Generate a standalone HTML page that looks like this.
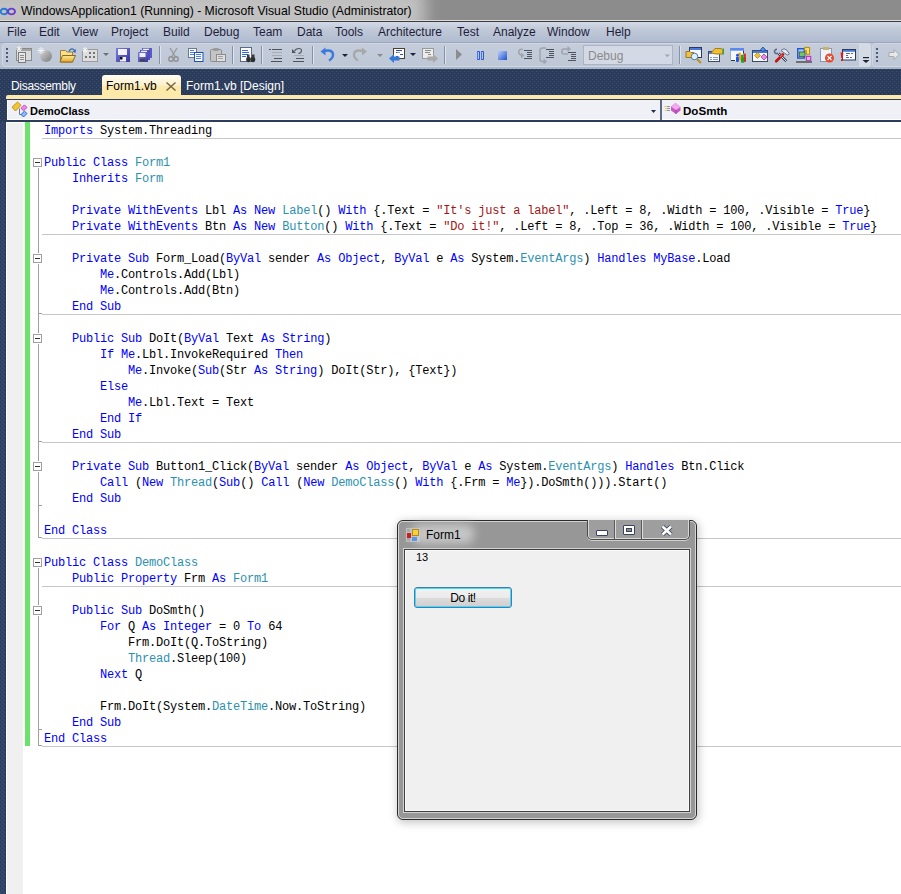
<!DOCTYPE html>
<html><head><meta charset="utf-8">
<style>
*{margin:0;padding:0;box-sizing:border-box}
html,body{width:901px;height:894px;overflow:hidden}
body{position:relative;background-color:#2b3b5a;background-image:conic-gradient(at 1px 1px,transparent 270deg,#3c4f74 0),conic-gradient(at 1px 1px,transparent 270deg,#3c4f74 0);background-size:4px 4px;background-position:2px 1px,0 3px;font-family:"Liberation Sans",sans-serif;font-size:12px;color:#000}
.a{position:absolute}
#title{left:0;top:0;width:901px;height:20px;background:#8c8c8c;overflow:hidden}
#glow{left:-20px;top:-12px;width:445px;height:44px;background:#c2c2c2;filter:blur(8px)}
#title .t{left:21px;top:4px;font-size:12.2px;white-space:pre;color:#000}
#tl1{left:0;top:20px;width:901px;height:1px;background:#dcdcdc}
#tl2{left:0;top:21px;width:901px;height:1px;background:#3c3c3c}
#menu{left:0;top:22px;width:901px;height:20px;background:linear-gradient(#d4dbe8,#c3cbd9 30%,#b0bbd0)}
#menu span{position:absolute;top:3px;white-space:pre;color:#1e1e3c}
#ml{left:0;top:42px;width:901px;height:1px;background:#9aa7bf}
#tbar{left:0;top:43px;width:901px;height:26px;background:linear-gradient(#b9c3d3 0,#b9c3d3 24px,#a9b5c8 24px)}
#tb1{left:2px;top:43px;width:868px;height:24px;border-radius:3px;background:linear-gradient(#c5cddb,#bdc7d6);border:1px solid #d0d7e2}
#tbov{left:859px;top:43px;width:12px;height:24px;border-radius:0 3px 3px 0;background:#d5dbe5}
#tb2{left:872px;top:43px;width:40px;height:24px;border-radius:3px;background:linear-gradient(#c5cddb,#bdc7d6);border:1px solid #d0d7e2}
.grip{width:2px;height:2px;background:#4a5a78}
#navy{display:none}
#ystrip{left:6px;top:95px;width:895px;height:4px;background:#fde9a9;border-radius:2px 0 0 0}
#dd{left:7px;top:100px;width:894px;height:20px;background:#f0f1f7;border-left:1px solid #fff;border-bottom:1px solid #fff}
#ddsep{left:660px;top:100px;width:2px;height:20px;background:#5d6b85}
#ln99{left:6px;top:99px;width:895px;height:1px;background:#2e3d5b}
#ln120{left:6px;top:120px;width:895px;height:2px;background:#2e3d5b}
#editor{left:6px;top:122px;width:895px;height:772px;background:#fff}
#margin{left:7px;top:123px;width:16px;height:771px;background:#f0f0f0}
#green{left:25px;top:122px;width:5px;height:624px;background:#6be26b}
pre{position:absolute;left:44px;top:123px;font-family:"Liberation Mono",monospace;font-size:12px;line-height:16px;letter-spacing:-0.2px;color:#000}
.k{color:#0000ff}.ty{color:#2b91af}.s{color:#a31515}
.sep{position:absolute;height:1px;background:#c6c6c6}
.vl{position:absolute;width:1px;background:#a0a0a0}
.box{position:absolute;width:9px;height:9px;border:1px solid #a0a0a0;background:#fff}
.box::after{content:"";position:absolute;left:1px;top:3px;width:5px;height:1px;background:#333}
.tick{position:absolute;width:4px;height:1px;background:#a0a0a0}

#tabs span{position:absolute;white-space:pre;font-size:12px}
#tabact{left:102px;top:75px;width:79px;height:21px;border-radius:3px 3px 0 0;background:linear-gradient(#fffcf2,#fdf0c8 50%,#fde9a9 52%,#fde9a9)}
.ddtxt{position:absolute;top:105px;font-weight:bold;font-size:11px;white-space:pre}
#form{left:397px;top:520px;width:300px;height:300px;border:1px solid #2a2a2a;border-radius:6px;background:#979797;box-shadow:1px 2px 9px 1px rgba(0,0,0,0.22)}
#forminner{left:0;top:0;width:298px;height:298px;border:1px solid #d4d4d4;border-radius:5px}
#client{left:6px;top:28px;width:286px;height:263px;border:1px solid #404040;outline:1px solid #d2d2d2;background:#f0f0f0;box-shadow:inset 1px 1px #fafafa,inset -1px -1px #fafafa}
#capbtns{left:189px;top:-1px;width:103px;height:20px;border:1px solid #4a4a4a;border-top:none;border-radius:0 0 5px 5px;background:#9e9e9e;box-shadow:inset 1px 0 #d8d8d8, inset -1px 0 #d8d8d8, inset 0 -1px #d8d8d8, 0 1px #d0d0d0}
#dobtn{left:414px;top:587px;width:98px;height:21px;border:1px solid #3c7fb1;border-radius:3px;background:linear-gradient(#f2f2f2 0,#ebebeb 50%,#dddddd 51%,#cfcfcf);box-shadow:inset 0 0 0 1px #48d8fb}
#lstrip{left:0;top:122px;width:6px;height:772px;background-color:#34476a;background-image:conic-gradient(at 1px 1px,transparent 270deg,#24365a 0),conic-gradient(at 1px 1px,transparent 270deg,#24365a 0);background-size:4px 4px;background-position:2px 2px,0 0;border-right:1px solid #2a3b5c}
</style></head><body>
<div id="title" class="a"><div id="glow" class="a"></div><svg class="a" style="left:0;top:7px" width="17" height="10"><ellipse cx="4" cy="4.5" rx="3.3" ry="2.8" fill="none" stroke="#2a7ad8" stroke-width="1.9"/><ellipse cx="11.5" cy="4.5" rx="3.5" ry="2.9" fill="none" stroke="#6a3ad0" stroke-width="1.9"/></svg><span class="a t">WindowsApplication1 (Running) - Microsoft Visual Studio (Administrator)</span></div>
<div id="tl1" class="a"></div><div id="tl2" class="a"></div>
<div id="menu" class="a">
<span style="left:7px">File</span><span style="left:39px">Edit</span><span style="left:72px">View</span><span style="left:111px">Project</span><span style="left:163px">Build</span><span style="left:204px">Debug</span><span style="left:253px">Team</span><span style="left:297px">Data</span><span style="left:335px">Tools</span><span style="left:378px">Architecture</span><span style="left:457px">Test</span><span style="left:493px">Analyze</span><span style="left:547px">Window</span><span style="left:606px">Help</span>
</div>
<div id="ml" class="a"></div>
<div id="tbar" class="a"></div>
<div id="tb1" class="a"></div>
<div id="tbov" class="a"></div>
<div id="tb2" class="a"></div>
<svg class="a" style="left:0;top:0" width="901" height="70">
<defs>
<linearGradient id="gBlue" x1="0" y1="0" x2="1" y2="1"><stop offset="0" stop-color="#b8d0ff"/><stop offset="1" stop-color="#1f4fc8"/></linearGradient>
<linearGradient id="gGray" x1="0" y1="0" x2="1" y2="1"><stop offset="0" stop-color="#d8d8d8"/><stop offset="1" stop-color="#7a7a7a"/></linearGradient>
<linearGradient id="gFloppy" x1="0" y1="0" x2="1" y2="1"><stop offset="0" stop-color="#7a7ae0"/><stop offset="1" stop-color="#3838a0"/></linearGradient>
<linearGradient id="gFold" x1="0" y1="0" x2="0" y2="1"><stop offset="0" stop-color="#fbe9a0"/><stop offset="1" stop-color="#e8a820"/></linearGradient>
</defs>
<!-- grips -->
<g fill="#4a5a78"><rect x="6" y="48" width="2" height="2"/><rect x="6" y="52" width="2" height="2"/><rect x="6" y="56" width="2" height="2"/><rect x="6" y="60" width="2" height="2"/>
<rect x="876" y="48" width="2" height="2"/><rect x="876" y="52" width="2" height="2"/><rect x="876" y="56" width="2" height="2"/><rect x="876" y="60" width="2" height="2"/></g>
<!-- separators -->
<g stroke="#8591a8" stroke-width="1"><path d="M159.5 46V64M232.5 46V64M261.5 46V64M312.5 46V64M444.5 46V64M679.5 46V64"/></g>
<g stroke="#dfe4ec" stroke-width="1"><path d="M160.5 46V64M233.5 46V64M262.5 46V64M313.5 46V64M445.5 46V64M680.5 46V64"/></g>
<!-- icon1 new project -->
<rect x="16.5" y="48.5" width="15" height="12" fill="#dadada" stroke="#8a8a8a"/>
<rect x="17" y="49" width="14" height="2" fill="#a4a4a4"/>
<rect x="18.5" y="52.5" width="7" height="10" fill="#e6e6e6" stroke="#7c7c7c"/>
<path d="M20 55.5h4M20 57.5h4M20 59.5h4" stroke="#8a8a8a"/>
<path d="M19 46v6M16 49h6M17 47l4 4M21 47l-4 4" stroke="#f4f4f4" stroke-width="1"/>
<!-- icon2 add item sphere -->
<circle cx="46" cy="56" r="6" fill="url(#gGray)"/>
<path d="M41 47v7M37.5 50.5h7M38.5 48l5 5M43.5 48l-5 5" stroke="#f4f4f4" stroke-width="1"/>
<!-- icon3 open folder -->
<path d="M60.5 50.5h5l1.5 1.5h5.5v10h-12z" fill="#f8e08a" stroke="#a08040"/>
<path d="M62.5 55.5h13l-3 6.5h-12.5z" fill="url(#gFold)" stroke="#8a6a20"/>
<path d="M69 51.5C70 48.5 73 48 74.5 50.5" fill="none" stroke="#3a68b0" stroke-width="1.3"/>
<path d="M76 49l-0.5 4-3-1.5z" fill="#3a68b0"/>
<!-- icon4 grid -->
<rect x="82.5" y="49.5" width="15" height="12" fill="#dedede" stroke="#9c9c9c"/>
<g fill="#767676"><rect x="89" y="52" width="2" height="2"/><rect x="93" y="52" width="2" height="2"/><rect x="85" y="56" width="2" height="2"/><rect x="89" y="56" width="2" height="2"/><rect x="93" y="56" width="2" height="2"/></g>
<path d="M85 47v6M82 50h6M83 48l4 4M87 48l-4 4" stroke="#f4f4f4"/>
<path d="M103 53h6l-3 3z" fill="#707070"/>
<!-- save -->
<rect x="116" y="48" width="14" height="14" fill="url(#gFloppy)"/>
<rect x="118" y="49" width="9" height="6" fill="#f2f2fa"/>
<rect x="120" y="57" width="6" height="4.5" fill="#f0f0f0"/><rect x="120" y="57" width="2.5" height="2.5" fill="#111"/>
<!-- save all -->
<rect x="142" y="48" width="10" height="10" fill="#5a5ac8"/><rect x="143" y="48.7" width="6" height="1.5" fill="#f0f0fa"/>
<rect x="140" y="50" width="10" height="10" fill="#4e4eb8"/><rect x="141" y="50.7" width="6" height="1.5" fill="#f0f0fa"/>
<rect x="138" y="52" width="10" height="10" fill="url(#gFloppy)"/><rect x="139.5" y="53" width="6" height="4" fill="#f2f2fa"/><rect x="140" y="59" width="5" height="2.5" fill="#444"/>
<!-- cut -->
<path d="M170 48L175.5 57M177 48L171.5 57" stroke="#9a9a9a" stroke-width="1.4"/>
<circle cx="171" cy="59" r="2.2" fill="none" stroke="#909090" stroke-width="1.4"/><circle cx="176" cy="59" r="2.2" fill="none" stroke="#909090" stroke-width="1.4"/>
<!-- copy -->
<rect x="188.5" y="48.5" width="8" height="9" fill="#f8faff" stroke="#6a7a98"/>
<path d="M190 50.5h4M190 52.5h5M190 54.5h5" stroke="#4a80e0"/>
<rect x="194.5" y="52.5" width="8.5" height="9" fill="#f8faff" stroke="#1f4fb0"/>
<path d="M196 54.5h5M196 56.5h5M196 58.5h5" stroke="#4a80e0"/>
<!-- paste -->
<rect x="210.5" y="49.5" width="11" height="12" rx="1" fill="#c4c4c4" stroke="#8c8c8c"/>
<rect x="213.5" y="48" width="5" height="3" fill="#9a9a9a"/>
<rect x="216.5" y="54.5" width="9" height="7" fill="#e0e0e0" stroke="#8c8c8c"/>
<path d="M218 56.5h5M218 58.5h5" stroke="#a0a0a0"/>
<!-- find in files -->
<rect x="240.5" y="47.5" width="11" height="14" fill="#fbfcff" stroke="#5a6a88"/>
<path d="M242 50.5h6M242 52.5h7M242 54.5h6M242 56.5h4" stroke="#3a6ad8"/>
<ellipse cx="248.5" cy="59.5" rx="2.3" ry="2.7" fill="#2e2e2e"/><ellipse cx="253" cy="59.5" rx="2.3" ry="2.7" fill="#2e2e2e"/>
<rect x="247" y="54.5" width="2.5" height="3" fill="#3a3a3a"/><rect x="252" y="54.5" width="2.5" height="3" fill="#3a3a3a"/>
<!-- comment -->
<g fill="#4e535e"><rect x="269" y="49" width="2" height="1"/><rect x="272" y="49" width="10" height="1"/><rect x="274" y="58" width="8" height="1"/><rect x="271" y="61" width="11" height="1"/></g>
<g fill="#a8acb4"><rect x="272" y="52" width="10" height="1"/><rect x="272" y="55" width="10" height="1"/></g>
<!-- uncomment -->
<path d="M294.5 51C296 48 301.5 47.5 301.5 50.5C301.5 53 299 53.5 298.5 53.5" fill="none" stroke="#4e535e" stroke-width="1.1"/>
<path d="M292 49v4h4z" fill="#4e535e"/>
<g fill="#a8acb4"><rect x="294" y="55" width="10" height="1"/></g>
<g fill="#4e535e"><rect x="296" y="58" width="8" height="1"/><rect x="293" y="61" width="11" height="1"/></g>
<!-- undo -->
<path d="M329 60.5C335 57 334 50 327.5 50.5L324.5 51" fill="none" stroke="#3a7ae0" stroke-width="2.4"/>
<path d="M320.5 51.5l5-4v8z" fill="#3a7ae0"/>
<path d="M342 54h6l-3 3z" fill="#1a2438"/>
<!-- redo -->
<path d="M358 60.5C352 57 353 50 359.5 50.5L362.5 51" fill="none" stroke="#a8a8a8" stroke-width="2.4"/>
<path d="M367 51.5l-5-4v8z" fill="#a8a8a8"/>
<path d="M377 54h6l-3 3z" fill="#8a8a8a"/>
<!-- nav back -->
<rect x="393.5" y="48.5" width="11" height="10" fill="#fffef4" stroke="#4a4030"/>
<path d="M396 50.5h6M396 52.5h4M400 54.5h3M396 56.5h2" stroke="#2a4ae8"/>
<path d="M397 52.5h3" stroke="#9a9a9a"/>
<path d="M389 58.5L394 54V56.5H399.5V60.5H394V63Z" fill="#3a78d8"/>
<path d="M410 53h6l-3 3z" fill="#1a2438"/>
<!-- nav fwd -->
<rect x="422.5" y="48.5" width="11" height="10" fill="#ececec" stroke="#9a9a9a"/>
<path d="M425 50.5h6M425 52.5h5M428 54.5h3" stroke="#8a8a8a"/>
<path d="M438 58.5L433 54V56.5H427.5V60.5H433V63Z" fill="#a8a8a8"/>
<!-- play pause stop -->
<path d="M456 49L462 54.5 456 60Z" fill="#8c8c8c"/>
<rect x="477" y="51" width="3" height="9" rx="0.8" fill="#2a5ad8"/><rect x="481" y="51" width="3" height="9" rx="0.8" fill="#2a5ad8"/>
<rect x="477.8" y="52" width="1" height="7" fill="#cfe0ff"/><rect x="481.8" y="52" width="1" height="7" fill="#cfe0ff"/>
<rect x="498" y="51" width="9" height="9" fill="url(#gBlue)"/>
<!-- step into -->
<path d="M523 49.5C518 48.5 517.5 54 521 55L523 55.5" fill="none" stroke="#a0a4ac" stroke-width="1.5"/>
<path d="M524.5 55.5l-3.5-3v6z" fill="#a0a4ac"/>
<g fill="#4e535e"><rect x="524" y="50" width="8" height="1"/><rect x="527" y="52" width="5" height="1"/><rect x="527" y="54" width="5" height="1"/><rect x="527" y="56" width="5" height="1"/><rect x="524" y="58" width="8" height="1"/></g>
<!-- step over -->
<path d="M546 48H542.5C541 48 540 49 540 50.5V59.5C540 61 541 61.5 542.5 61.5H545" fill="none" stroke="#a0a4ac" stroke-width="1.5"/>
<path d="M547 61.5l-3.5-3v6z" fill="#a0a4ac"/>
<g fill="#4e535e"><rect x="546" y="49" width="8" height="1"/><rect x="549" y="51" width="5" height="1"/><rect x="549" y="53" width="5" height="1"/><rect x="549" y="55" width="5" height="1"/><rect x="546" y="57" width="8" height="1"/></g>
<!-- step out -->
<path d="M569 49H564C561 49 561 54 564 54H568" fill="none" stroke="#a0a4ac" stroke-width="1.5"/>
<path d="M571 49l-3.5-3v6z" fill="#a0a4ac"/>
<g fill="#4e535e"><rect x="568" y="52" width="8" height="1"/><rect x="571" y="54" width="5" height="1"/><rect x="571" y="56" width="5" height="1"/><rect x="571" y="58" width="5" height="1"/><rect x="568" y="60" width="8" height="1"/></g>
<!-- combo -->
<rect x="583.5" y="45.5" width="89" height="19" fill="#d4dae5" stroke="#aab4c6"/>
<text x="588" y="60" font-family="Liberation Sans" font-size="12" fill="#8a8a8a">Debug</text>
<path d="M664.5 54.5h5.5l-2.75 2.8z" fill="#a0a8b8"/>
<!-- icon A find symbol -->
<rect x="689.5" y="47.5" width="12" height="10" fill="#f4f8ff" stroke="#2a3a58"/>
<rect x="690" y="48" width="11" height="2" fill="#4a7ae0"/>
<path d="M686 51.5h4l1 1h3v5h-8z" fill="#f0c040" stroke="#9a7a20"/>
<path d="M697 59l4 4" stroke="#c09020" stroke-width="2.2"/>
<circle cx="694.5" cy="56.5" r="3.3" fill="#d8f0ff" stroke="#5a7a9a"/>
<!-- icon B properties -->
<rect x="708.5" y="51.5" width="11" height="10" fill="#f4f8ff" stroke="#3a4a68"/>
<rect x="709" y="52" width="3" height="2" fill="#4a7ae0"/>
<path d="M710 57.5h2M713 57.5h5M710 59.5h2M713 59.5h5" stroke="#8a9ab8"/>
<path d="M711 53L715 48.5H721L723 50V54H716Z" fill="#f0c030" stroke="#a08020"/>
<rect x="722.5" y="48.5" width="1.5" height="6" fill="#3aa040"/>
<!-- icon C -->
<rect x="730" y="48" width="14" height="13" fill="#f6f8fc"/>
<rect x="730" y="48" width="14" height="2.7" fill="#5a8af0"/>
<rect x="730" y="50.7" width="0.8" height="10" fill="#8a9ab8"/>
<rect x="731" y="60" width="4" height="1" fill="#2a3450"/>
<rect x="743" y="50.7" width="1" height="3" fill="#2a3450"/>
<rect x="739" y="55" width="2.8" height="5.8" rx="1" fill="#f0a818"/><circle cx="739.6" cy="53.9" r="1.4" fill="#f0a818"/>
<rect x="736" y="56.5" width="2.9" height="5.4" rx="1" fill="#1f50e8"/><circle cx="737.5" cy="55.2" r="1.4" fill="#1f50e8"/>
<rect x="743.5" y="56" width="2.5" height="6" rx="1" fill="#e02818"/><circle cx="744.7" cy="54.9" r="1.3" fill="#e02818"/>
<rect x="741" y="57" width="3.3" height="5.8" rx="1" fill="#28a028"/><circle cx="742.4" cy="56" r="1.4" fill="#28a028"/>
<!-- icon D -->
<rect x="752.5" y="50.5" width="15" height="11" fill="#f4f8ff" stroke="#3a4a68"/>
<rect x="753" y="51" width="14" height="2" fill="#4a7ae0"/>
<path d="M757.5 52.5l3 3-3 3-3-3z" fill="#f0c030" stroke="#b08a10" stroke-width="0.8"/>
<path d="M764 54l3 3-3 3-3-3z" fill="#f088f0" stroke="#a040a0" stroke-width="0.8"/>
<path d="M763 47l2.5 2.5-2.5 2.5-2.5-2.5z" fill="#4a8ae0" stroke="#2050a0" stroke-width="0.8"/>
<!-- icon E tools -->
<path d="M777 49.3C773.8 49.6 773.6 53.6 776.8 53.6H778.5" stroke="#5a6a88" fill="none" stroke-width="1.5"/>
<path d="M781 50.5L784 48.7 787 50.3 789.3 53.8 787.6 55 784.6 53.2Z" fill="#e6e9f0" stroke="#5a6a88" stroke-width="0.9"/>
<path d="M778.5 53.3L786.3 61.2" stroke="#26324c" stroke-width="2.6"/>
<path d="M778.5 53.3L786.3 61.2" stroke="#ffffff" stroke-width="1"/>
<path d="M782.8 54.6L776.2 61.2" stroke="#c41616" stroke-width="2.8" stroke-linecap="round"/>
<path d="M782.3 54.8L780 57" stroke="#f06a50" stroke-width="1.2"/>
<!-- icon F toolbox -->
<rect x="797.7" y="48.7" width="6.6" height="9.4" fill="#9cccf8" stroke="#1f5ad0" stroke-width="1.4"/>
<rect x="799.3" y="52" width="5.7" height="4.6" fill="#6cc86c" stroke="#5a4a3a" stroke-width="0.8"/>
<path d="M804.6 47.4H809.6V54.4H806.3V50.6H804.6Z" fill="#fadc60" stroke="#b08a10" stroke-width="1"/>
<rect x="806.4" y="56.4" width="4.3" height="4.3" fill="#f4a8f4" stroke="#b040c0" stroke-width="1.2"/>
<rect x="796" y="61" width="16" height="2" fill="#6e6e6e"/>
<!-- icon G clipboard x -->
<rect x="820.5" y="48.5" width="11" height="13" fill="#eef2fa" stroke="#8a9aaa"/>
<rect x="823" y="47" width="6" height="3" fill="#c8b070"/>
<circle cx="829.5" cy="58" r="4.5" fill="#e84a2a"/>
<path d="M827.5 56l4 4M831.5 56l-4 4" stroke="#fff" stroke-width="1.2"/>
<!-- icon H error list -->
<rect x="842.5" y="49.5" width="13" height="10.5" fill="#f8faff" stroke="#2a3a58"/>
<rect x="843" y="50" width="12" height="1.8" fill="#4a7ae0"/>
<path d="M846 53.5h4M851 53.5h2M846 55.5h2M846 57.5h3M850 57.5h2" stroke="#5a6a88"/>
<path d="M840.6 52.5H843.4L842.8 58H841.2Z" fill="#e81818"/><rect x="841" y="59" width="2" height="2" fill="#e81818"/>
<!-- overflow glyph -->
<rect x="863" y="57" width="6" height="1.2" fill="#1a2438"/>
<path d="M862.5 60h7l-3.5 3z" fill="#1a2438"/>
<!-- forward gray -->
<path d="M899 54.5L894 49.5V52.5H889V56.5H894V59.5Z" fill="#e8e8e8" stroke="#a0a0a0" stroke-width="0.8"/>
</svg>

<div id="navy" class="a"></div>
<div id="ystrip" class="a"></div>
<div id="dd" class="a"></div>
<div id="ddsep" class="a"></div><div id="ln99" class="a"></div><div id="ln120" class="a"></div>
<div id="lstrip" class="a"></div><div id="editor" class="a"></div>
<div id="margin" class="a"></div>
<div id="green" class="a"></div>
<div class="sep" style="left:42px;top:138px;width:859px"></div>
<div class="sep" style="left:42px;top:234px;width:859px"></div>
<div class="sep" style="left:42px;top:314px;width:859px"></div>
<div class="sep" style="left:42px;top:442px;width:859px"></div>
<div class="sep" style="left:42px;top:538px;width:859px"></div>
<div class="sep" style="left:42px;top:586px;width:859px"></div>
<div class="sep" style="left:42px;top:746px;width:859px"></div>
<div class="box" style="left:33px;top:158px"></div>
<div class="box" style="left:33px;top:254px"></div>
<div class="box" style="left:33px;top:334px"></div>
<div class="box" style="left:33px;top:462px"></div>
<div class="box" style="left:33px;top:558px"></div>
<div class="box" style="left:33px;top:606px"></div>
<div class="vl" style="left:38px;top:168px;height:85px"></div>
<div class="vl" style="left:38px;top:264px;height:69px"></div>
<div class="vl" style="left:38px;top:344px;height:117px"></div>
<div class="vl" style="left:38px;top:472px;height:66px"></div>
<div class="vl" style="left:38px;top:568px;height:37px"></div>
<div class="vl" style="left:38px;top:616px;height:130px"></div>
<div class="tick" style="left:38px;top:313px"></div>
<div class="tick" style="left:38px;top:441px"></div>
<div class="tick" style="left:38px;top:505px"></div>
<div class="tick" style="left:38px;top:537px"></div>
<div class="tick" style="left:38px;top:729px"></div>
<div class="tick" style="left:38px;top:745px"></div>
<pre><span class="k">Imports</span> System.Threading

<span class="k">Public</span> <span class="k">Class</span> <span class="ty">Form1</span>
    <span class="k">Inherits</span> <span class="ty">Form</span>

    <span class="k">Private</span> <span class="k">WithEvents</span> Lbl <span class="k">As</span> <span class="k">New</span> <span class="ty">Label</span>() <span class="k">With</span> {.Text = <span class="s">"It's just a label"</span>, .Left = 8, .Width = 100, .Visible = <span class="k">True</span>}
    <span class="k">Private</span> <span class="k">WithEvents</span> Btn <span class="k">As</span> <span class="k">New</span> <span class="ty">Button</span>() <span class="k">With</span> {.Text = <span class="s">"Do it!"</span>, .Left = 8, .Top = 36, .Width = 100, .Visible = <span class="k">True</span>}

    <span class="k">Private</span> <span class="k">Sub</span> Form_Load(<span class="k">ByVal</span> sender <span class="k">As</span> <span class="k">Object</span>, <span class="k">ByVal</span> e <span class="k">As</span> System.<span class="ty">EventArgs</span>) <span class="k">Handles</span> <span class="k">MyBase</span>.Load
        <span class="k">Me</span>.Controls.Add(Lbl)
        <span class="k">Me</span>.Controls.Add(Btn)
    <span class="k">End</span> <span class="k">Sub</span>

    <span class="k">Public</span> <span class="k">Sub</span> DoIt(<span class="k">ByVal</span> Text <span class="k">As</span> <span class="k">String</span>)
        <span class="k">If</span> <span class="k">Me</span>.Lbl.InvokeRequired <span class="k">Then</span>
            <span class="k">Me</span>.Invoke(<span class="k">Sub</span>(Str <span class="k">As</span> <span class="k">String</span>) DoIt(Str), {Text})
        <span class="k">Else</span>
            <span class="k">Me</span>.Lbl.Text = Text
        <span class="k">End</span> <span class="k">If</span>
    <span class="k">End</span> <span class="k">Sub</span>

    <span class="k">Private</span> <span class="k">Sub</span> Button1_Click(<span class="k">ByVal</span> sender <span class="k">As</span> <span class="k">Object</span>, <span class="k">ByVal</span> e <span class="k">As</span> System.<span class="ty">EventArgs</span>) <span class="k">Handles</span> Btn.Click
        <span class="k">Call</span> (<span class="k">New</span> <span class="ty">Thread</span>(<span class="k">Sub</span>() <span class="k">Call</span> (<span class="k">New</span> <span class="ty">DemoClass</span>() <span class="k">With</span> {.Frm = <span class="k">Me</span>}).DoSmth())).Start()
    <span class="k">End</span> <span class="k">Sub</span>

<span class="k">End</span> <span class="k">Class</span>

<span class="k">Public</span> <span class="k">Class</span> <span class="ty">DemoClass</span>
    <span class="k">Public</span> <span class="k">Property</span> Frm <span class="k">As</span> <span class="ty">Form1</span>

    <span class="k">Public</span> <span class="k">Sub</span> DoSmth()
        <span class="k">For</span> Q <span class="k">As</span> <span class="k">Integer</span> = 0 <span class="k">To</span> 64
            Frm.DoIt(Q.ToString)
            <span class="ty">Thread</span>.Sleep(100)
        <span class="k">Next</span> Q

        Frm.DoIt(System.<span class="ty">DateTime</span>.Now.ToString)
    <span class="k">End</span> <span class="k">Sub</span>
<span class="k">End</span> <span class="k">Class</span>
</pre>

<div id="tabs">
<span class="a" style="left:11px;top:79px;color:#fff;letter-spacing:-0.3px">Disassembly</span>
<div id="tabact" class="a"></div>
<span class="a" style="left:106px;top:79px;color:#000">Form1.vb</span>
<svg class="a" style="left:166px;top:82px" width="10" height="9"><path d="M0.5 0.5L9.5 8.5M9.5 0.5L0.5 8.5" stroke="#6f6345" stroke-width="1.35"/></svg>
<span class="a" style="left:186px;top:79px;color:#fff">Form1.vb [Design]</span>
</div>
<svg class="a" style="left:10px;top:100px" width="20" height="20" viewBox="10 100 20 20">
<path d="M17.5 102L21 105.3 15.5 111 12 107.2Z" fill="#f3c534" stroke="#b88a12" stroke-width="0.9" stroke-linejoin="round"/>
<path d="M19.5 108.5V114.5H21.5" fill="none" stroke="#6a7a8e" stroke-width="1"/>
<path d="M24.4 104.9L27 107.5 23.5 110.7 21 108.3Z" fill="#f08cec" stroke="#b040b0" stroke-width="0.9" stroke-linejoin="round"/>
<path d="M24.5 111.2L27 113.5 23.5 117 21 114.5Z" fill="#8cc0f8" stroke="#1f5ac8" stroke-width="0.9" stroke-linejoin="round"/>
</svg>
<span class="ddtxt" style="left:30px">DemoClass</span>
<svg class="a" style="left:651px;top:110px" width="6" height="3"><path d="M0 0H5L2.5 3Z" fill="#1f2d44"/></svg>
<svg class="a" style="left:660px;top:100px" width="24" height="20" viewBox="660 100 24 20">
<path d="M664 106.5H670M665 108.5H670M664.5 110.5H670" stroke="#ddd27a" stroke-width="1"/>
<path d="M667 106.5H670M667 108.5H670M667 110.5H670" stroke="#8a96a8" stroke-width="1"/>
<path d="M675.5 103L680.5 107V110.5L676 114L671 110.5V106.5Z" fill="#c659c2"/>
<path d="M675.5 103L680.5 107L676 110L671 106.5Z" fill="#f3a8ef"/>
<path d="M676 110V114" stroke="#a040a0" stroke-width="0.8"/>
</svg>
<span class="ddtxt" style="left:683px;font-size:11.6px;top:104px">DoSmth</span>

<div id="form" class="a">
<div id="forminner" class="a"></div>
<div class="a" style="left:14px;top:3px;width:62px;height:20px;background:#c6c6c6;filter:blur(5px);border-radius:8px"></div>
<svg class="a" style="left:8px;top:7px" width="15" height="15">
<rect x="0" y="0" width="14" height="14" fill="#cfcfcf" opacity="0.7"/>
<rect x="1" y="1" width="3" height="3" fill="#a8a8a8"/>
<rect x="1" y="10" width="3" height="3" fill="#a8a8a8"/>
<rect x="1" y="5" width="4" height="5" fill="#c42020"/>
<rect x="6.5" y="1.5" width="6" height="6" fill="#fad040" stroke="#b88a10"/>
<rect x="6" y="9" width="5" height="4" fill="#5a96e6"/>
</svg>
<span class="a" style="left:28px;top:7px;font-size:12px">Form1</span>
<div id="capbtns" class="a">
<div class="a" style="left:26px;top:0;width:1px;height:19px;background:#5a5a5a"></div>
<div class="a" style="left:27px;top:0;width:1px;height:19px;background:#dcdcdc"></div>
<div class="a" style="left:53px;top:0;width:1px;height:19px;background:#5a5a5a"></div>
<div class="a" style="left:54px;top:0;width:1px;height:19px;background:#dcdcdc"></div>
<div class="a" style="left:8px;top:10px;width:12px;height:6px;background:#fff;border:1px solid #3a4260;border-radius:1px"></div>
<div class="a" style="left:35px;top:5px;width:12px;height:10px;background:#fff;border:1px solid #3a4260;border-radius:1px"><div class="a" style="left:2px;top:2px;width:6px;height:4px;background:#8c8c8c;border:1px solid #3a4260"></div></div>
<svg class="a" style="left:72px;top:4px" width="14" height="13"><path d="M2.5 2.5L11 10.5M11 2.5L2.5 10.5" stroke="#3a4260" stroke-width="4.4"/><path d="M2.5 2.5L11 10.5M11 2.5L2.5 10.5" stroke="#fff" stroke-width="2.6"/></svg>
</div>
<div id="client" class="a">
<span class="a" style="left:11px;top:1px;font-size:11px">13</span>
</div>
</div>
<div id="dobtn" class="a"><span class="a" style="left:0;width:96px;text-align:center;top:3px;font-size:12px;letter-spacing:-0.4px">Do it!</span></div>
</body></html>
